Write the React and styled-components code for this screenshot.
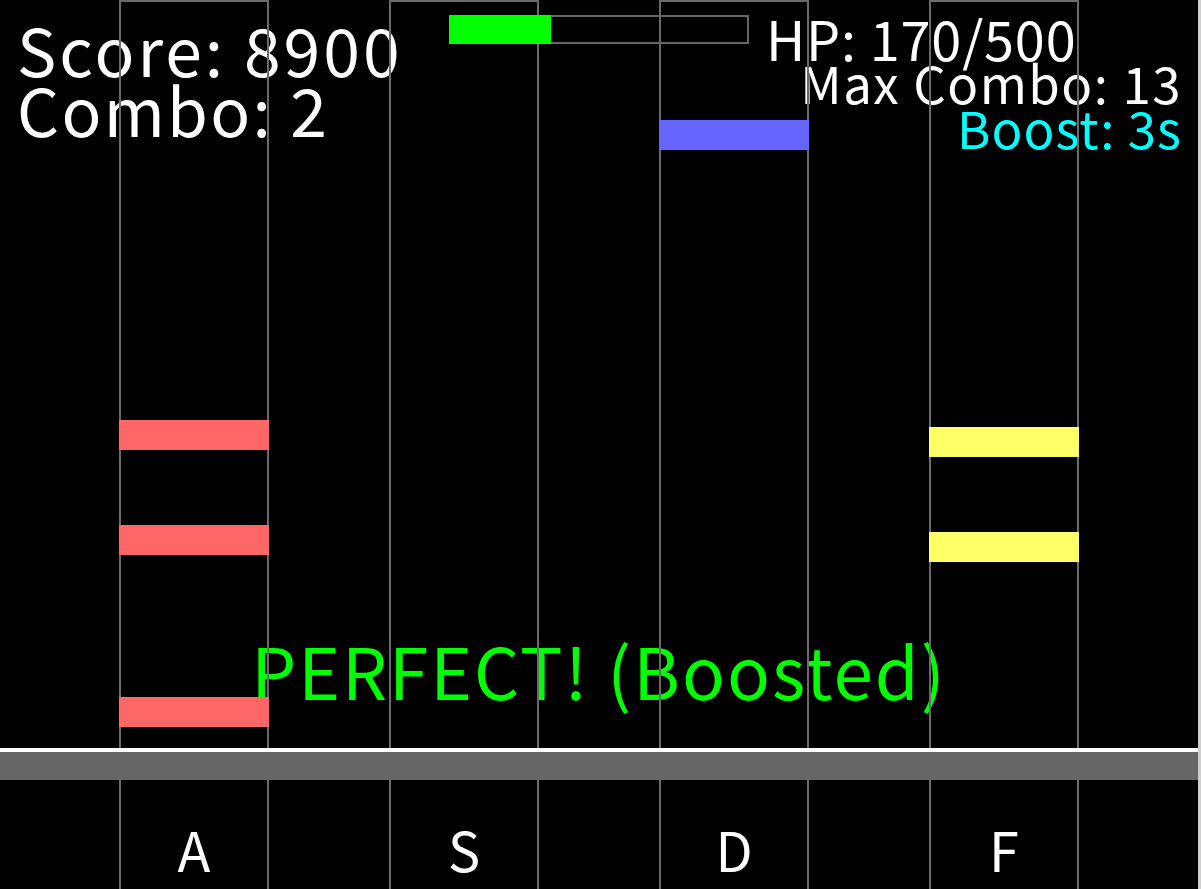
import styled, { createGlobalStyle } from "styled-components";

const GlobalStyle = createGlobalStyle`
  html, body {
    margin: 0;
    padding: 0;
    background: #cfcfcf;
  }
  body {
    font-family: "Noto Sans CJK JP", "Noto Sans", sans-serif;
    overflow: hidden;
  }
`;

const lanes = [
  { key: "A", notes: [{ top: 420, color: "#ff6666" }, { top: 525, color: "#ff6666" }, { top: 697, color: "#ff6666" }] },
  { key: "S", notes: [] },
  { key: "D", notes: [{ top: 120, color: "#6666ff" }] },
  { key: "F", notes: [{ top: 427, color: "#ffff66" }, { top: 532, color: "#ffff66" }] },
];

const hp = 170;
const maxHp = 500;

const Playfield = styled.div`
  display: grid;
  width: 1198px;
  height: 889px;
  background: #000;
  overflow: hidden;
  color: #fff;
`;

// every layer sits in the same grid cell, painted in DOM order
const Layer = styled.div`
  grid-area: 1 / 1;
  position: relative;
  min-width: 0;
  min-height: 0;
`;

/* text under the lanes */
const Hud = styled(Layer)`
  display: grid;
  grid-template-columns: 749px 1fr;
  align-items: start;
`;

const LeftStats = styled.div`
  padding: 18px 0 0 17px;
  font-size: 66px;
  line-height: 60px;
  letter-spacing: 3px;
  white-space: nowrap;
`;

const ComboLine = styled.div`
  letter-spacing: 2.3px;
`;

const RightStats = styled.div`
  display: flex;
  flex-direction: column;
  padding: 16px 16px 0 0;
  white-space: nowrap;
`;

const HpText = styled.div`
  align-self: flex-start;
  margin-left: 17px;
  font-size: 54px;
  line-height: 44px;
  letter-spacing: 0.8px;
`;

const StatLine = styled.div`
  align-self: flex-end;
  font-size: 51px;
  line-height: 45px;
  letter-spacing: ${(p) => p.$spacing || 1.5}px;
  color: ${(p) => p.$color || "#fff"};
`;

const JudgementLayer = styled(Layer)`
  padding-top: 629px;
  text-align: center;
  font-size: 71px;
  line-height: 80px;
  letter-spacing: 2px;
  color: #00ff00;
  white-space: nowrap;
`;

const LaneRow = styled(Layer)`
  display: flex;
  gap: 120px;
  padding-left: 119px;
`;

const Lane = styled.div`
  position: relative;
  box-sizing: border-box;
  width: 150px;
  height: 100%;
  border: 2px solid #6a6a6a;
  border-bottom: none;
  display: flex;
  flex-direction: column;
  justify-content: flex-end;
  align-items: center;
`;

const Note = styled.div`
  position: absolute;
  left: -2px;
  width: 150px;
  height: 30px;
  background: ${(p) => p.$color};
`;

const KeyLabel = styled.div`
  padding-bottom: 13px;
  font-size: 54px;
  line-height: 54px;
  color: #fff;
`;

const HpLayer = styled(Layer)`
  padding: 15px 0 0 449px;
`;

const HpBar = styled.div`
  width: 300px;
  height: 29px;
  box-shadow: inset 0 0 0 2px #666;
  display: flex;
`;

const HpFill = styled.div`
  height: 100%;
  background: #00ff00;
`;

const JudgeLayer = styled(Layer)`
  padding-top: 748px;
  display: flex;
  flex-direction: column;
`;

const JudgeLine = styled.div`
  height: 4px;
  background: #fff;
`;

const JudgeBar = styled.div`
  height: 28px;
  background: #666;
`;

export default function App() {
  return (
    <>
      <GlobalStyle />
      <Playfield>
        <Hud>
          <LeftStats>
            <div>Score: 8900</div>
            <ComboLine>Combo: 2</ComboLine>
          </LeftStats>
          <RightStats>
            <HpText>HP: {hp}/{maxHp}</HpText>
            <StatLine>Max Combo: 13</StatLine>
            <StatLine $color="#00ffff" $spacing={1}>Boost: 3s</StatLine>
          </RightStats>
        </Hud>

        <JudgementLayer>PERFECT! (Boosted)</JudgementLayer>

        <LaneRow>
          {lanes.map((lane) => (
            <Lane key={lane.key}>
              {lane.notes.map((n, i) => (
                <Note key={i} $color={n.color} style={{ top: n.top - 2 }} />
              ))}
              <KeyLabel>{lane.key}</KeyLabel>
            </Lane>
          ))}
        </LaneRow>

        <HpLayer>
          <HpBar>
            <HpFill style={{ width: `${(hp / maxHp) * 100}%` }} />
          </HpBar>
        </HpLayer>

        <JudgeLayer>
          <JudgeLine />
          <JudgeBar />
        </JudgeLayer>
      </Playfield>
    </>
  );
}
